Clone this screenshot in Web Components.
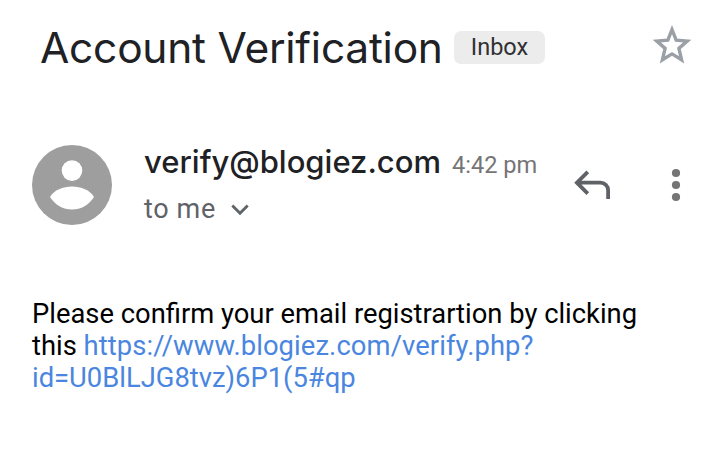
<!DOCTYPE html>
<html lang="en">
<head>
<meta charset="utf-8">
<title>Account Verification</title>
<style>
  body { margin: 0; background: #fff; }
</style>
</head>
<body>
<mail-view>
  <mail-subject slot="subject" label="Inbox">Account Verification</mail-subject>
  <mail-sender slot="sender" time="4:42 pm" to="to me">verify@blogiez.com</mail-sender>
  <mail-body slot="body" href="https://www.blogiez.com/verify.php?id=U0BlLJG8tvz)6P1(5#qp">
    <span>Please confirm your email registrartion by clicking</span>
    <span slot="lead">this</span>
  </mail-body>
</mail-view>

<script>
class MailView extends HTMLElement {
  constructor() {
    super()
    this.attachShadow({ mode: 'open' }).innerHTML = /* html */`
      <style>
        :host {
          display: flex;
          flex-direction: column;
          box-sizing: border-box;
          height: 476px;
          padding: 19px 28px 0 32px;
          overflow: hidden;
          background: #fff;
          font-family: Roboto, 'Liberation Sans', sans-serif;
        }
      </style>
      <slot name="subject"></slot>
      <slot name="sender"></slot>
      <slot name="body"></slot>
    `
  }
}

class MailSubject extends HTMLElement {
  constructor() {
    super()
    this.attachShadow({ mode: 'open' })
  }

  connectedCallback() {
    this.shadowRoot.innerHTML = /* html */`
      <style>
        :host { display: flex; align-items: center; height: 57px; padding-left: 8px; white-space: nowrap; }
        h1 {
          margin: 0;
          width: 402px;
          font: 400 42.5px/56px Inter, sans-serif;
          letter-spacing: -0.25px;
          color: #202124;
        }
        .label {
          box-sizing: border-box;
          width: 91px;
          height: 33px;
          margin-left: 12px;
          border-radius: 7px;
          background: #ececec;
          color: #303134;
          font-size: 23.5px;
          line-height: 33px;
          text-align: center;
        }
        svg { display: block; margin-left: auto; margin-bottom: 5px; }
      </style>
      <h1><slot></slot></h1>
      <span class="label">${this.getAttribute('label')}</span>
      <svg width="40" height="40" viewBox="0 0 40 40">
        <path fill="none" stroke="#9aa0a6" stroke-width="3.4" d="M20 4.7 24.2 15.2 35.2 16.1 26.9 23.4 29.6 34.8 20 28.9 10.4 34.8 13.1 23.4 4.8 16.1 15.8 15.2Z"/>
      </svg>
    `
  }
}

class MailSender extends HTMLElement {
  constructor() {
    super()
    this.attachShadow({ mode: 'open' })
  }

  connectedCallback() {
    this.shadowRoot.innerHTML = /* html */`
      <style>
        :host { display: flex; align-items: center; height: 80px; margin-top: 69px; white-space: nowrap; }
        svg { display: block; flex: none; }
        .info { margin-left: 32px; width: 420px; }
        .from { display: flex; align-items: baseline; height: 44px; line-height: 44px; }
        .name {
          font-family: Inter, sans-serif;
          font-weight: 500;
          font-size: 31px;
          color: #202124;
        }
        .time { margin-left: 11px; font-size: 23.6px; color: #757575; }
        .to { display: flex; align-items: center; height: 44px; margin-top: 3px; font-size: 27px; color: #5f6368; }
        .to span { letter-spacing: 0.65px; }
        .to svg { margin: 3px 0 0 15px; }
        .reply { margin-left: 9px; margin-bottom: 2px; }
        .more { margin-left: auto; margin-right: 11px; }
      </style>
      <svg width="80" height="80" viewBox="0 0 80 80">
        <circle cx="40" cy="40" r="40" fill="#9e9e9e"/>
        <circle cx="40" cy="25.6" r="10.3" fill="#fff"/>
        <path fill="#fff" d="M18 52C22 45 31 41.5 40 41.5S58 45 62 52C57 60 49 64.5 40 64.5S23 60 18 52Z"/>
      </svg>
      <div class="info">
        <div class="from">
          <span class="name"><slot></slot></span>
          <span class="time">${this.getAttribute('time')}</span>
        </div>
        <div class="to">
          <span>${this.getAttribute('to')}</span>
          <svg width="18" height="12" viewBox="0 0 18 12">
            <path fill="none" stroke="#5f6368" stroke-width="2.8" d="M1.3 1.4 9 9.2 16.7 1.4"/>
          </svg>
        </div>
      </div>
      <svg class="reply" width="40" height="32" viewBox="0 0 40 32">
        <path fill="none" stroke="#5f6368" stroke-width="3.8" d="M14.8 3.8 3.9 14.7 14.8 25.6M3.9 14.7H27.5A7.6 7.6 0 0 1 35.1 22.3V31"/>
      </svg>
      <svg class="more" width="10" height="34" viewBox="0 0 10 34">
        <g fill="#757575"><circle cx="5" cy="5" r="4.1"/><circle cx="5" cy="17" r="4.1"/><circle cx="5" cy="29" r="4.1"/></g>
      </svg>
    `
  }
}

class MailBody extends HTMLElement {
  constructor() {
    super()
    this.attachShadow({ mode: 'open' })
  }

  connectedCallback() {
    const href = this.getAttribute('href')
    const cut = href.indexOf('?') + 1
    this.shadowRoot.innerHTML = /* html */`
      <style>
        :host { display: block; width: 620px; margin-top: 73px; font-size: 27.36px; line-height: 32px; color: #000; }
        a { color: #4a86e0; text-decoration: none; }
        .page { letter-spacing: 0.1px; }
        .query { display: block; }
      </style>
      <div><slot></slot></div>
      <div>
        <slot name="lead"></slot>
        <a href="${href}"><span class="page">${href.slice(0, cut)}</span><span class="query">${href.slice(cut)}</span></a>
      </div>
    `
  }
}

customElements.define('mail-view', MailView)
customElements.define('mail-subject', MailSubject)
customElements.define('mail-sender', MailSender)
customElements.define('mail-body', MailBody)
</script>
</body>
</html>
